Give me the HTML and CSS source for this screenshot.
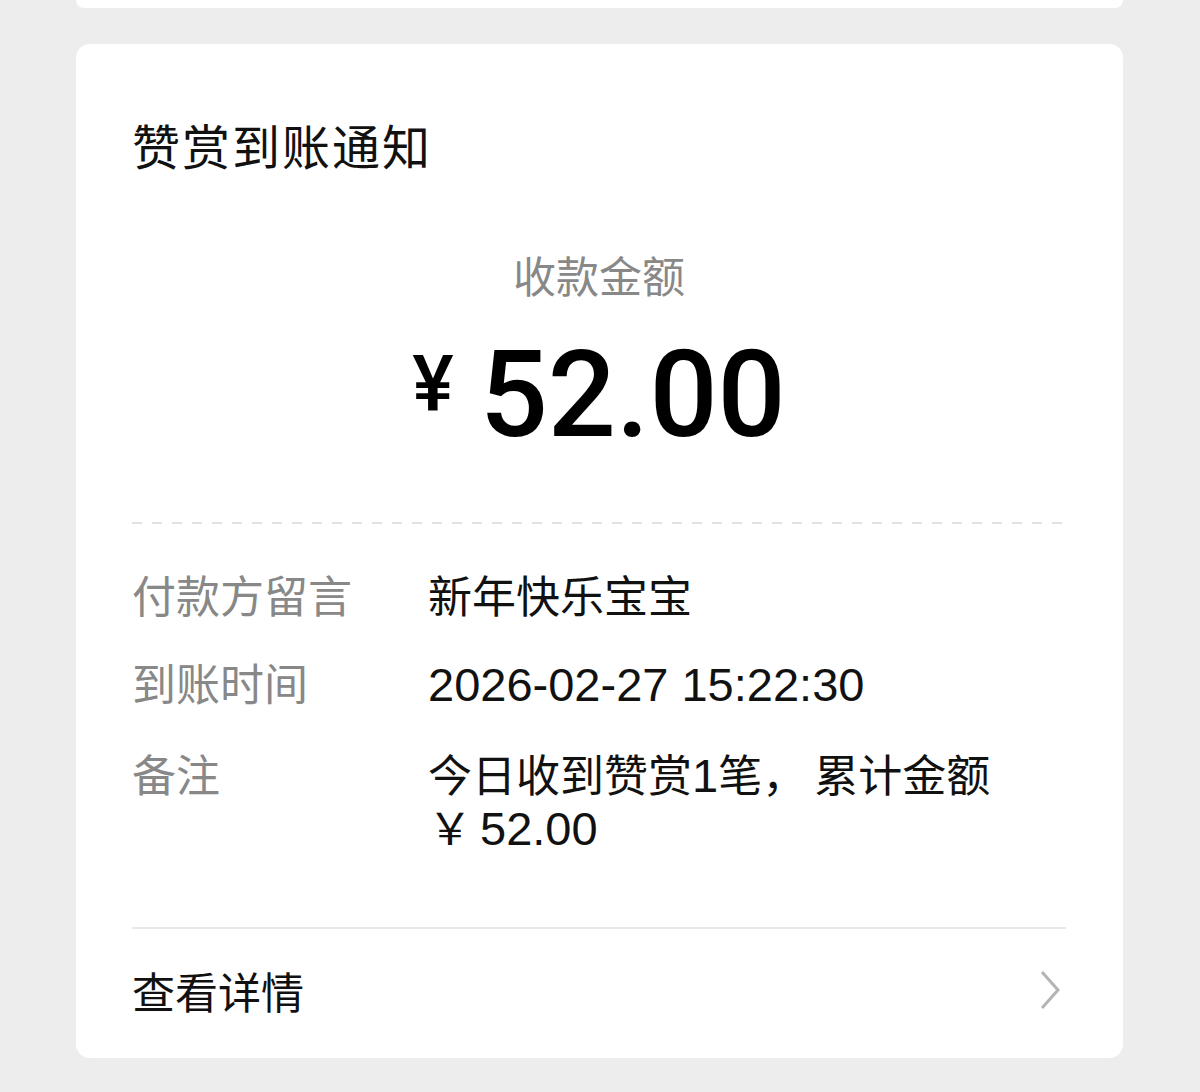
FILE: index.html
```html
<!DOCTYPE html>
<html lang="zh-CN">
<head>
    <meta charset="UTF-8">
    <meta name="viewport" content="width=device-width, initial-scale=1.0">
    <title>赞赏到账通知</title>
    <link rel="stylesheet" href="styles.css">
</head>
<body>
    <div class="card card-prev"></div>

    <div class="card notice">
        <h1 class="notice-title">赞赏到账通知</h1>

        <div class="amount-block">
            <div class="amount-label">收款金额</div>
            <div class="amount">
                <span class="amount-currency">¥</span>
                <span class="amount-value">52.00</span>
            </div>
        </div>

        <div class="dashed"></div>

        <div class="details">
            <div class="row">
                <div class="row-label">付款方留言</div>
                <div class="row-value">新年快乐宝宝</div>
            </div>
            <div class="row">
                <div class="row-label">到账时间</div>
                <div class="row-value"><span class="num">2026-02-27 15:22:30</span></div>
            </div>
            <div class="row row-note">
                <div class="row-label">备注</div>
                <div class="row-value">今日收到赞赏<span class="num">1</span>笔<span class="comma">，</span>累计金额<br>￥<span class="num yen-gap">52.00</span></div>
            </div>
        </div>

        <div class="more">
            <span>查看详情</span>
            <svg class="chevron" width="24" height="40" viewBox="0 0 24 40">
                <polyline points="4,2 20,20 4,38" fill="none" stroke="#b4b4b4" stroke-width="3"/>
            </svg>
        </div>
    </div>
</body>
</html>
```

FILE: styles.css
```css
body {
    margin: 0;
    padding: 0 77px 0 76px;
    background: #ededed;
    font-family: "Liberation Sans", "Noto Sans CJK SC", sans-serif;
    color: #111;
}
.card {
    background: #fff;
    border-radius: 14px;
}
.card-prev {
    height: 8px;
    border-radius: 0 0 14px 14px;
    margin-bottom: 36px;
}
.notice {
    padding: 0 57px 0 56px;
    height: 1014px;
    box-sizing: border-box;
}
.notice-title {
    margin: 0;
    padding-top: 73px;
    font-size: 48px;
    line-height: 64px;
    letter-spacing: 2px;
    font-weight: normal;
    color: #111;
}
.amount-block {
    text-align: center;
    margin-top: 67px;
}
.amount-label {
    font-size: 43px;
    line-height: 60px;
    color: #888;
}
.amount {
    display: flex;
    justify-content: center;
    align-items: flex-start;
    margin-top: 42px;
    color: #000;
    font-family: Roboto, "Liberation Sans", sans-serif;
    font-weight: 500;
}
.amount-currency {
    font-size: 78px;
    line-height: 72px;
    margin-right: 26px;
    margin-top: -2px;
}
.amount-value {
    font-size: 120px;
    line-height: 90px;
}
.dashed {
    height: 2px;
    margin-top: 82px;
    background: repeating-linear-gradient(90deg, #e2e2e2 0 10px, transparent 10px 20px);
}
.details {
    padding-top: 47px;
    display: flex;
    flex-direction: column;
    gap: 35px;
}
.row {
    display: flex;
    font-size: 44px;
    line-height: 53px;
}
.row-note {
    margin-top: 3px;
}
.row-label {
    width: 296px;
    flex: none;
    color: #888;
}
.row-value {
    color: #111;
}
.num {
    font-size: 47px;
    line-height: 1;
}
.comma {
    margin-right: 8px;
}
.yen-gap {
    margin-left: 8px;
}
.more {
    margin-top: 71px;
    border-top: 2px solid #e8e8e8;
    display: flex;
    align-items: center;
    justify-content: space-between;
    height: 122px;
    font-size: 43px;
}
.chevron {
    margin-right: 4px;
}
```
